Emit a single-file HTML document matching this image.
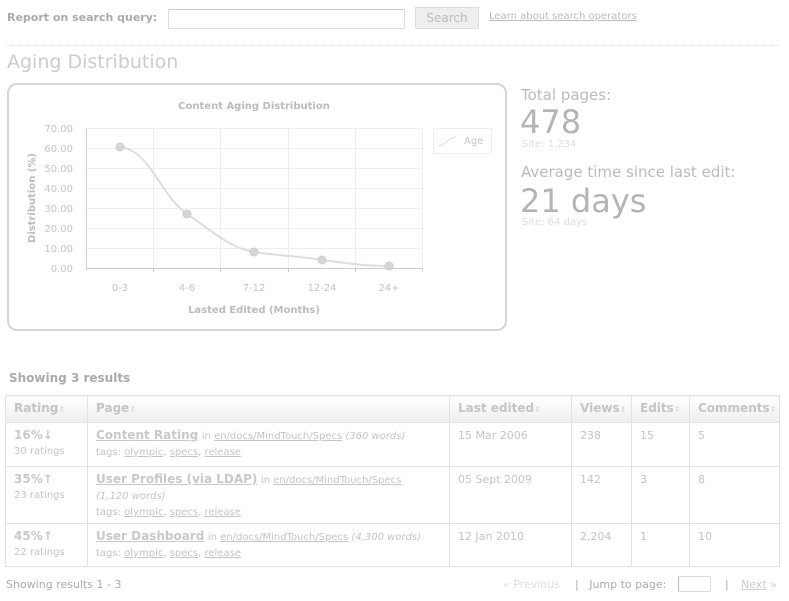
<!DOCTYPE html>
<html><head><meta charset="utf-8"><style>
body{margin:0;width:789px;height:601px;background:#fff;font-family:"DejaVu Sans","Liberation Sans",sans-serif;color:#bbb;position:relative;overflow:hidden}
.a{position:absolute;white-space:nowrap}
u{text-decoration:underline}
table{position:absolute;left:5px;top:395px;border-collapse:collapse;font-size:11px;width:774px;table-layout:fixed}
td,th{border:1px solid #e2e2e2;vertical-align:top;text-align:left;overflow:hidden;white-space:nowrap}
th{background:linear-gradient(#fff,#eee);color:#c4c4c4;font-size:12px;height:25px;padding:0 8px;line-height:25px;box-sizing:border-box}
td{color:#c4c4c4;padding:5px 8px 0;line-height:15px;box-sizing:border-box}
.s{font-size:8px;color:#ddd}
.big{font-weight:bold;font-size:12px;color:#c8c8c8}
.lnk{font-weight:bold;font-size:12px;color:#c8c8c8;text-decoration:underline}
.sm{font-size:10px;color:#c4c4c4}
</style></head><body>
<div class="a" style="left:7px;top:11px;font-size:11px;font-weight:bold;color:#aaa">Report on search query:</div>
<div class="a" style="left:168px;top:9px;width:235px;height:18px;border:1px solid #ddd;border-top-color:#ccc"></div>
<div class="a" style="left:415px;top:7px;width:62px;height:20px;background:#eee;border:1px solid #ddd;color:#bbb;font-size:12px;text-align:center;line-height:20px">Search</div>
<div class="a" style="left:489px;top:11px;font-size:10px;color:#bbb;text-decoration:underline">Learn about search operators</div>
<div class="a" style="left:7px;top:45px;width:772px;border-top:1px dotted #ddd"></div>
<div class="a" style="left:7px;top:51px;font-size:19px;color:#ccc">Aging Distribution</div>
<div class="a" style="left:7px;top:83px;width:496px;height:244px;border:2px solid #d4d4d4;border-radius:10px"></div>
<svg class="a" style="left:0;top:0" width="520" height="340" font-family="DejaVu Sans,sans-serif">
<text x="254" y="109" font-size="10" font-weight="bold" fill="#bbb" text-anchor="middle">Content Aging Distribution</text>
<g stroke="#eee" stroke-width="1">
<line x1="86" y1="128.5" x2="423" y2="128.5"/><line x1="86" y1="148.5" x2="423" y2="148.5"/><line x1="86" y1="168.5" x2="423" y2="168.5"/><line x1="86" y1="188.5" x2="423" y2="188.5"/><line x1="86" y1="208.5" x2="423" y2="208.5"/><line x1="86" y1="228.5" x2="423" y2="228.5"/><line x1="86" y1="248.5" x2="423" y2="248.5"/>
<line x1="153.5" y1="128" x2="153.5" y2="268"/><line x1="220.5" y1="128" x2="220.5" y2="268"/><line x1="288.5" y1="128" x2="288.5" y2="268"/><line x1="355.5" y1="128" x2="355.5" y2="268"/><line x1="422.5" y1="128" x2="422.5" y2="268"/>
</g>
<g stroke="#ccc"><line x1="86.5" y1="128" x2="86.5" y2="270"/><line x1="86" y1="268.5" x2="423" y2="268.5"/>
<line x1="153.5" y1="268" x2="153.5" y2="272"/><line x1="220.5" y1="268" x2="220.5" y2="272"/><line x1="288.5" y1="268" x2="288.5" y2="272"/><line x1="355.5" y1="268" x2="355.5" y2="272"/><line x1="422.5" y1="268" x2="422.5" y2="272"/></g>
<g font-size="10" fill="#c4c4c4" text-anchor="end">
<text x="73" y="132">70.00</text><text x="73" y="152">60.00</text><text x="73" y="172">50.00</text><text x="73" y="192">40.00</text><text x="73" y="212">30.00</text><text x="73" y="232">20.00</text><text x="73" y="252">10.00</text><text x="73" y="272">0.00</text></g>
<g font-size="10" fill="#c4c4c4" text-anchor="middle">
<text x="120" y="291">0-3</text><text x="187" y="291">4-6</text><text x="254" y="291">7-12</text><text x="322" y="291">12-24</text><text x="389" y="291">24+</text></g>
<text x="254" y="313" font-size="10" font-weight="bold" fill="#bbb" text-anchor="middle">Lasted Edited (Months)</text>
<text transform="translate(35,198) rotate(-90)" font-size="10" font-weight="bold" fill="#bbb" text-anchor="middle">Distribution (%)</text>
<path d="M120 147 C150 150,160 195,187 214 C215 233,230 248,254 252 C280 256,300 256,322 260 C345 263,365 266,389 266" fill="none" stroke="#ddd" stroke-width="2"/>
<g fill="#d6d6d6" stroke="#ccc"><circle cx="120" cy="147" r="4"/><circle cx="187" cy="214" r="4"/><circle cx="254" cy="252" r="4"/><circle cx="322" cy="260" r="4"/><circle cx="389" cy="266" r="4"/></g>
<rect x="433.5" y="128.5" width="58" height="25" fill="#fff" stroke="#eee"/>
<path d="M438 146 C446 146,448 137,456 137" fill="none" stroke="#ddd"/>
<text x="464" y="144" font-size="10" fill="#c4c4c4">Age</text>
</svg>
<div class="a" style="left:521px;top:86px;font-size:15px;color:#bbb">Total pages:</div>
<div class="a" style="left:520px;top:102px;font-size:32px;color:#b4b4b4;line-height:40px">478</div>
<div class="a" style="left:522px;top:139px;font-size:10px;color:#ddd">Site: 1,234</div>
<div class="a" style="left:521px;top:163px;font-size:15px;color:#bbb">Average time since last edit:</div>
<div class="a" style="left:520px;top:181px;font-size:32px;color:#b4b4b4;line-height:40px">21 days</div>
<div class="a" style="left:522px;top:217px;font-size:10px;color:#ddd">Site: 64 days</div>
<div class="a" style="left:9px;top:371px;font-size:12px;font-weight:bold;color:#aaa">Showing 3 results</div>
<table>
<colgroup><col style="width:82px"><col style="width:362px"><col style="width:122px"><col style="width:60px"><col style="width:58px"><col style="width:90px"></colgroup>
<tr><th>Rating<span class="s">⇕</span></th><th>Page<span class="s">⇕</span></th><th>Last edited<span class="s">⇕</span></th><th>Views<span class="s">⇕</span></th><th>Edits<span class="s">⇕</span></th><th>Comments<span class="s">⇕</span></th></tr>
<tr style="height:44px"><td><span class="big">16%↓</span><br><span class="sm">30 ratings</span></td><td><span class="lnk">Content Rating</span> <span class="sm">in <u>en/docs/MindTouch/Specs</u> <i>(360 words)</i></span><br><span class="sm">tags: <u>olympic</u>, <u>specs</u>, <u>release</u></span></td><td>15 Mar 2006</td><td>238</td><td>15</td><td>5</td></tr>
<tr style="height:57px"><td><span class="big">35%↑</span><br><span class="sm">23 ratings</span></td><td><span class="lnk">User Profiles (via LDAP)</span> <span class="sm">in <u>en/docs/MindTouch/Specs</u><br><i>(1,120 words)</i><br>tags: <u>olympic</u>, <u>specs</u>, <u>release</u></span></td><td>05 Sept 2009</td><td>142</td><td>3</td><td>8</td></tr>
<tr style="height:43px"><td><span class="big">45%↑</span><br><span class="sm">22 ratings</span></td><td><span class="lnk">User Dashboard</span> <span class="sm">in <u>en/docs/MindTouch/Specs</u> <i>(4,300 words)</i></span><br><span class="sm">tags: <u>olympic</u>, <u>specs</u>, <u>release</u></span></td><td>12 Jan 2010</td><td>2,204</td><td>1</td><td>10</td></tr>
</table>
<div class="a" style="left:6px;top:578px;font-size:11px;color:#aaa">Showing results 1 - 3</div>
<div class="a" style="left:503px;top:578px;font-size:11px;color:#ddd">« Previous</div>
<div class="a" style="left:575px;top:578px;font-size:11px;color:#aaa">|&nbsp;&nbsp; Jump to page:</div>
<div class="a" style="left:678px;top:576px;width:31px;height:14px;border:1px solid #ddd;border-left-color:#bbb"></div>
<div class="a" style="left:725px;top:578px;font-size:11px;color:#aaa">|</div>
<div class="a" style="left:741px;top:578px;font-size:11px;color:#ccc"><u>Next</u> »</div>
</body></html>
